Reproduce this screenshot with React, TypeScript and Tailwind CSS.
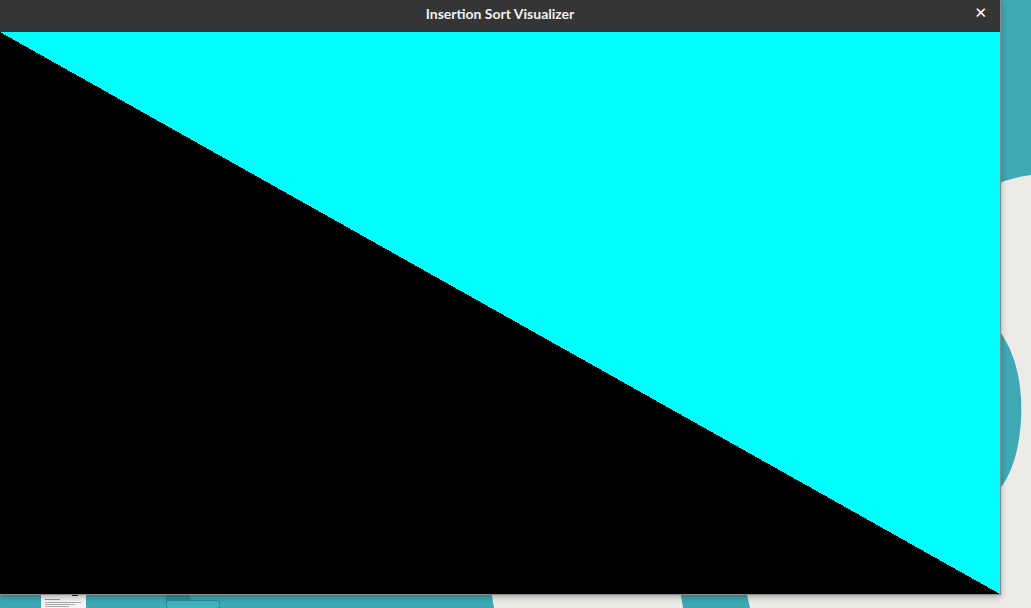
function Wallpaper() {
  return (
    <svg className="absolute inset-0" width="1031" height="608" viewBox="0 0 1031 608">
      <rect width="1031" height="608" fill="#3ea8b4" />
      {/* paper area on the right */}
      <path d="M995 185 Q1010 178 1031 175 L1031 608 L995 608 Z" fill="#ecebe8" />
      <path d="M995 325 Q1024 360 1021 420 Q1018 470 995 495 Z" fill="#3ea8b4" />
      {/* bottom strip shapes */}
      <path d="M491 590 L680 590 L683 608 L494 608 Z" fill="#ecebe8" />
      <path d="M746 590 L1031 590 L1031 608 L750 608 Z" fill="#ecebe8" />
      {/* document thumbnail */}
      <rect x="41" y="592" width="45" height="16" fill="#f4f4f2" />
      <rect x="72" y="592" width="6" height="4" fill="#333" />
      <rect x="45" y="599" width="15" height="1" fill="#999" />
      <rect x="45" y="602" width="36" height="1" fill="#aaa" />
      <rect x="45" y="604" width="30" height="1" fill="#aaa" />
      <rect x="45" y="606" width="24" height="1" fill="#aaa" />
      {/* folder */}
      <path d="M166 608 L166 596 Q166 594 169 594 L188 594 L192 600 L217 600 Q220 600 220 603 L220 608 Z" fill="#2f8f9a" />
      <rect x="167" y="601" width="52" height="7" rx="2" fill="#43b2bf" />
    </svg>
  );
}

function Canvas() {
  return (
    <svg width="1000" height="562" viewBox="0 0 1000 562" shapeRendering="crispEdges" className="block">
      <rect width="1000" height="562" fill="#000000" />
      <polygon points="0,0 1000,0 1000,562" fill="#00ffff" />
    </svg>
  );
}

export default function App() {
  return (
    <div className="relative h-[608px] w-[1031px] overflow-hidden">
      <Wallpaper />
      <div className="absolute left-0 top-0 w-[1001px] border-r border-b border-[#8a8a8a] shadow-[0_2px_6px_rgba(0,0,0,0.3)]">
        <div className="relative flex h-8 items-start justify-center bg-[#353535] pt-[3px]">
          <span className="font-['Lato',sans-serif] text-[14px] font-bold text-[#f0f0f0]">
            Insertion Sort Visualizer
          </span>
          <span className="absolute right-[13px] top-[2px] font-['DejaVu_Sans',sans-serif] text-[15px] font-bold text-white">
            ✕
          </span>
        </div>
        <Canvas />
      </div>
    </div>
  );
}
